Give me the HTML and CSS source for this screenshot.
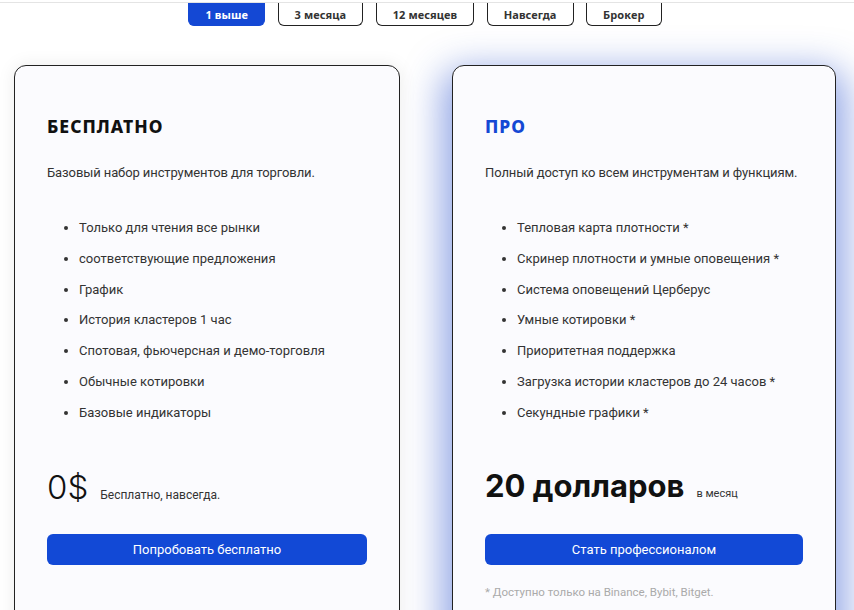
FILE: index.html
```html
<!DOCTYPE html>
<html lang="ru">
<head>
    <meta charset="UTF-8">
    <meta name="viewport" content="width=device-width, initial-scale=1.0">
    <title>Тарифы</title>
    <link rel="stylesheet" href="styles.css">
</head>
<body>
    <div class="topline"></div>
    <div class="tabs">
        <button class="tab active">1 выше</button>
        <button class="tab">3 месяца</button>
        <button class="tab">12 месяцев</button>
        <button class="tab">Навсегда</button>
        <button class="tab">Брокер</button>
    </div>
    <div class="plans">
        <div class="plan">
            <h2 class="plan-title">БЕСПЛАТНО</h2>
            <p class="plan-desc">Базовый набор инструментов для торговли.</p>
            <ul class="plan-list">
                <li>Только для чтения все рынки</li>
                <li>соответствующие предложения</li>
                <li>График</li>
                <li>История кластеров 1 час</li>
                <li>Спотовая, фьючерсная и демо-торговля</li>
                <li>Обычные котировки</li>
                <li>Базовые индикаторы</li>
            </ul>
            <div class="price">
                <span class="price-value light">0$</span>
                <span class="price-note">Бесплатно, навсегда.</span>
            </div>
            <button class="plan-btn">Попробовать бесплатно</button>
        </div>
        <div class="plan pro">
            <h2 class="plan-title">ПРО</h2>
            <p class="plan-desc">Полный доступ ко всем инструментам и функциям.</p>
            <ul class="plan-list">
                <li>Тепловая карта плотности *</li>
                <li>Скринер плотности и умные оповещения *</li>
                <li>Система оповещений Церберус</li>
                <li>Умные котировки *</li>
                <li>Приоритетная поддержка</li>
                <li>Загрузка истории кластеров до 24 часов *</li>
                <li>Секундные графики *</li>
            </ul>
            <div class="price">
                <span class="price-value">20 долларов</span>
                <span class="price-note small">в месяц</span>
            </div>
            <button class="plan-btn">Стать профессионалом</button>
            <p class="footnote">* Доступно только на Binance, Bybit, Bitget.</p>
        </div>
    </div>
</body>
</html>
```

FILE: styles.css
```css
body {
    margin: 0;
    background: #fff;
    font-family: "Roboto", "Inter", sans-serif;
    color: #222;
    overflow: hidden;
}
.topline {
    height: 2px;
    border-bottom: 1px solid #e4e4e4;
}
.tabs {
    display: flex;
    justify-content: center;
    gap: 12.5px;
    margin-left: -4px;
}
.tab {
    height: 23px;
    padding: 0 16px;
    border: 1px solid #222;
    border-top: 0;
    border-radius: 0 0 6px 6px;
    background: #fff;
    color: #333;
    font-family: "Noto Sans", sans-serif;
    font-weight: 700;
    font-size: 11px;
    letter-spacing: 0.1px;
    cursor: pointer;
}
.tab.active {
    background: #1448d4;
    border-color: #1448d4;
    color: #fff;
}
.plans {
    display: flex;
    gap: 52px;
    margin: 39px 0 0 14px;
    width: 822px;
}
.plan {
    width: 384px;
    height: 600px;
    box-sizing: border-box;
    padding: 47px 32px 0;
    border: 1px solid #222;
    border-radius: 12px;
    background: #fbfbfe;
    box-shadow: 0 0 18px rgba(0, 0, 0, 0.08);
}
.plan:first-child {
    width: 386px;
}
.plan.pro {
    box-shadow: 0 14px 36px 10px rgba(40, 80, 205, 0.5);
}
.plan-title {
    margin: 0;
    font-family: "Noto Sans", sans-serif;
    font-weight: 800;
    font-size: 17.5px;
    letter-spacing: 1px;
    color: #111;
    line-height: 26px;
}
.pro .plan-title {
    color: #1448d4;
}
.plan-desc {
    margin: 25px 0 0;
    font-size: 13px;
    line-height: 18px;
    color: #333;
    letter-spacing: -0.1px;
}
.plan-list {
    margin: 37px 0 0;
    padding-left: 32px;
    font-size: 13px;
    color: #333;
}
.plan-list li {
    height: 30.8px;
    line-height: 18px;
}
.price {
    display: flex;
    align-items: baseline;
    gap: 12px;
    margin-top: 32px;
    height: 40px;
}
.price-value {
    font-family: "Inter", sans-serif;
    font-size: 31px;
    font-weight: 700;
    color: #111;
}
.price-value.light {
    font-size: 33px;
    font-weight: 300;
}
.price-note {
    font-size: 12px;
    color: #333;
}
.price-note.small {
    font-size: 11px;
}
.plan-btn {
    display: block;
    width: 100%;
    height: 31px;
    margin-top: 27px;
    border: 0;
    border-radius: 6px;
    background: #1249d6;
    color: #fff;
    font-family: "Roboto", sans-serif;
    font-size: 13px;
    cursor: pointer;
}
.footnote {
    margin: 20px 0 0;
    font-size: 11.5px;
    color: #aaa;
}
```
